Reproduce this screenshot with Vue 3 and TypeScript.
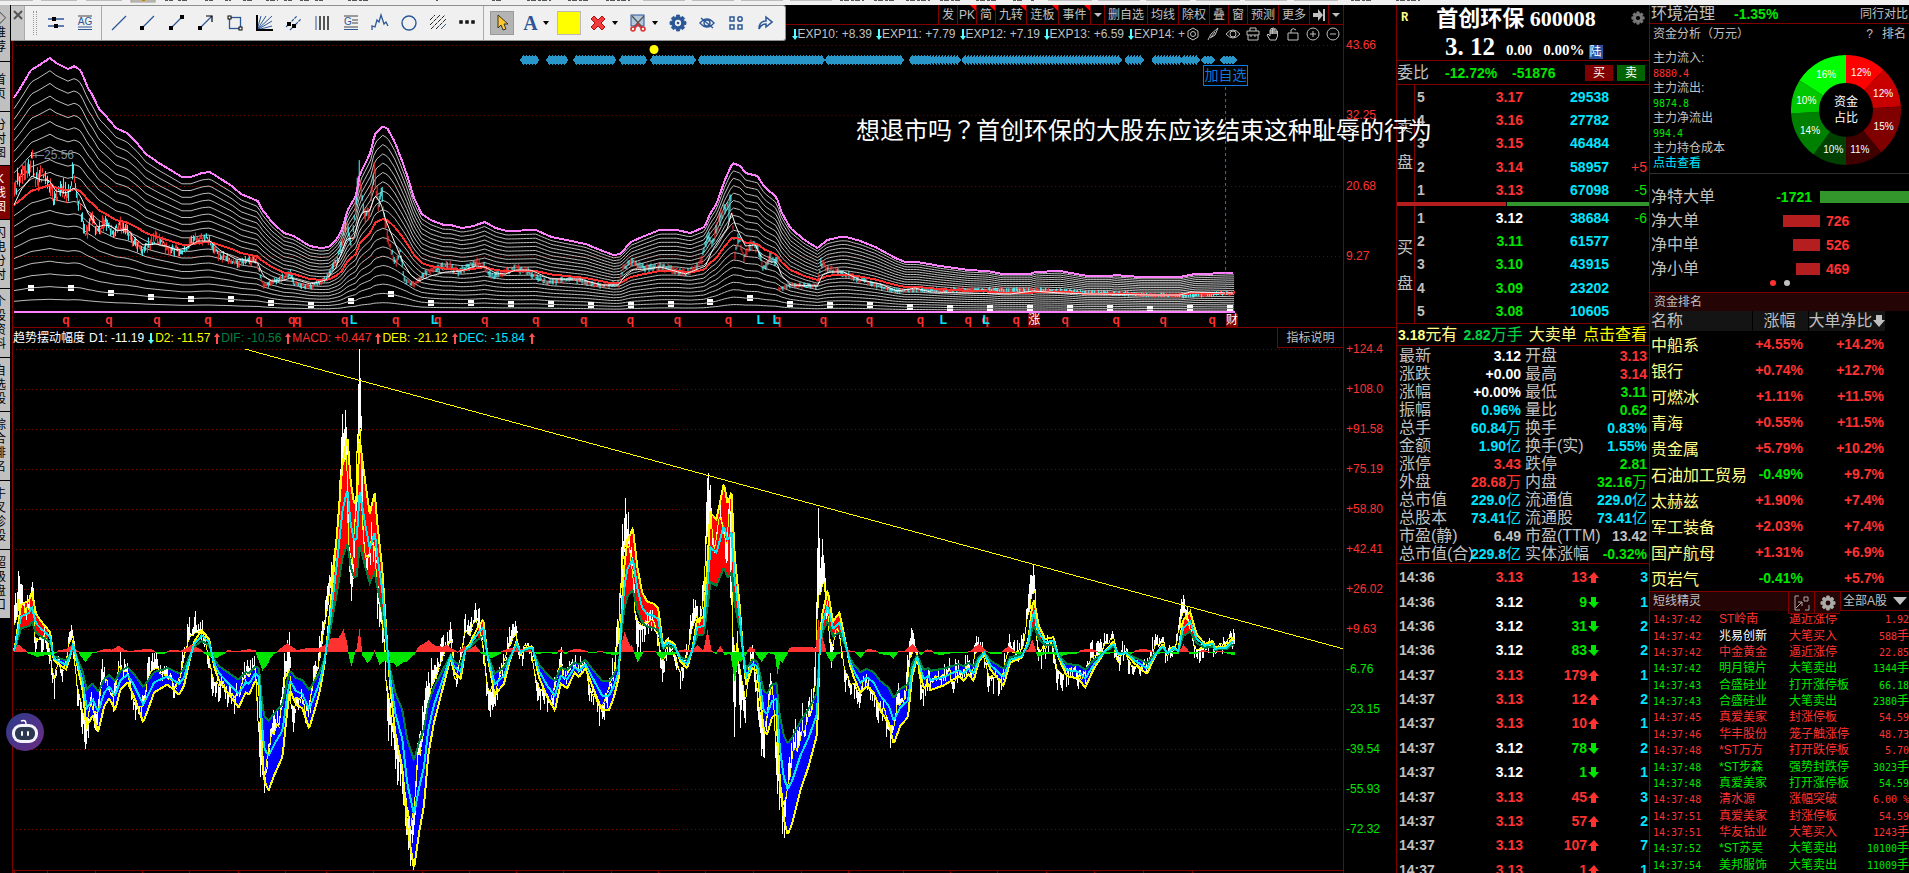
<script setup lang="ts">
type Pt = [number, number]

function toPts(flat: number[], x0 = 0, y0 = 0, sx = 1, sy = 1): Pt[] {
  const out: Pt[] = []
  for (let i = 0; i < flat.length; i += 2) out.push([x0 + flat[i] / sx, y0 + flat[i + 1] / sy])
  return out
}
function lerp(pts: Pt[], x: number): number {
  if (x <= pts[0][0]) return pts[0][1]
  for (let i = 1; i < pts.length; i++) {
    const [ax, ay] = pts[i - 1]
    const [bx, by] = pts[i]
    if (x <= bx) return ay + ((by - ay) * (x - ax)) / Math.max(bx - ax, 0.01)
  }
  return pts[pts.length - 1][1]
}
let seed = 20240611
function rnd(): number {
  seed = (seed * 1103515245 + 12345) % 2147483648
  return seed / 2147483648
}
const X0 = 13
const X1 = 1234
function line(fn: (x: number) => number, step = 2): string {
  const parts: string[] = []
  for (let x = X0; x <= X1; x += step) parts.push(`${x} ${fn(x).toFixed(1)}`)
  return 'M' + parts.join('L')
}

/* ---- upper plot: price with a fan of bands ---- */
const envelope = toPts([13,98,20,87,30,70,37,66,49,58,55,63,67,69,74,66,80,71,87,88,92,96,98,109,104,115,115,128,126,133,136,143,145,154,158,163,168,169,181,177,190,177,201,173,209,172,220,179,231,186,240,194,257,201,261,209,271,222,283,233,293,236,309,246,320,248,328,247,336,239,341,230,347,210,355,196,359,175,370,152,374,134,382,126,387,129,394,142,401,160,407,177,413,197,421,214,430,220,443,225,450,225,461,228,473,226,484,222,495,228,506,231,535,230,551,237,585,244,602,251,613,255,620,254,630,242,644,236,659,230,676,230,690,233,704,227,710,213,716,204,724,181,732,163,740,166,745,173,757,176,764,187,770,192,776,197,781,212,790,228,804,240,817,248,827,240,840,237,846,237,860,241,875,247,895,258,905,262,917,262,940,266,968,270,987,271,1002,274,1030,274,1035,272,1060,271,1087,276,1110,276,1115,275,1140,277,1180,277,1195,274,1230,273,1234,273])
const average = toPts([13,205,20,190,31,176,40,180,48,180,55,191,65,193,73,188,80,197,87,213,92,220,97,227,103,225,110,226,116,231,126,229,135,239,142,245,155,244,165,246,176,250,185,248,197,241,209,241,220,251,235,259,243,260,257,263,262,275,270,281,280,281,290,278,310,284,325,280,335,268,341,252,346,239,353,238,358,220,362,212,369,211,374,195,380,203,385,220,393,240,402,262,410,275,418,281,430,276,445,272,460,271,475,266,484,267,495,273,505,274,515,270,530,270,550,279,580,279,600,285,618,285,624,276,632,270,645,269,660,267,685,274,700,268,705,266,712,250,720,238,727,228,731,213,736,228,745,246,755,245,760,256,770,262,776,262,781,275,790,285,817,286,822,275,830,272,843,272,860,280,880,284,897,291,915,288,930,292,960,293,1010,294,1033,291,1060,293,1090,294,1150,295,1180,295,1190,292,1234,293])
const price = toPts([13,195,16,182,22,172,27,170,31,158,34,180,42,174,47,180,52,200,60,188,66,197,72,170,76,196,84,236,90,215,96,233,103,220,113,234,117,225,126,232,140,251,155,238,165,248,180,251,195,238,207,239,218,256,235,262,255,260,262,286,275,280,290,274,293,284,308,287,323,280,335,262,341,240,345,218,350,247,358,170,363,215,368,210,373,174,377,203,381,195,384,220,388,245,395,265,399,250,403,280,413,285,425,272,447,265,457,272,475,262,483,267,492,277,514,268,526,271,545,283,570,279,600,286,618,284,622,268,632,262,645,268,660,266,685,274,700,262,707,235,712,242,720,215,725,205,728,212,730,194,734,255,738,238,743,258,750,243,757,247,762,268,770,258,777,262,778,289,790,285,816,286,820,264,826,268,840,273,860,280,895,291,915,290,1033,290,1180,296,1234,293])
const FLOOR = 312
const bandY = (k: number) => (x: number) => FLOOR - ((FLOOR - lerp(envelope, x)) * k) / 20
const bands = Array.from({ length: 19 }, (_, i) => i + 1).filter(k => k !== 10).map(k => line(bandY(k), 3))
const topBand = line(bandY(20), 2)
const midBand = line(bandY(10), 2)
const averagePath = line(x => lerp(average, x), 2)
let upSticks = ''
let downSticks = ''
for (let x = X0; x <= X1; x += 1) {
  const p = lerp(price, x)
  const room = (FLOOR - p) / 150
  const mid = p + (rnd() - 0.5) * 14 * room
  const half = 1 + rnd() * 10 * room
  const seg = `M${x}.5 ${(mid - half).toFixed(1)}V${(mid + half).toFixed(1)}`
  if (rnd() < 0.5) upSticks += seg
  else downSticks += seg
}
const knots = Array.from({ length: 31 }, (_, i) => 30 + i * 40).map(x => ({ x: x - 3, y: Math.round(bandY(2)(x)) - 3 }))
const gemRuns: Pt[] = [[523, 535], [549, 564], [576, 612], [622, 645], [653, 694], [701, 822], [828, 901], [912, 957], [965, 1119], [1128, 1142], [1155, 1179], [1184, 1196], [1205, 1213], [1224, 1233]]
let gems = ''
for (const [a, b] of gemRuns) for (let x = a; x <= b; x += 3) gems += `M${x - 4} 60l4 -5l4 5l-4 5z`
const priceLevels = [{ t: '43.66', y: 45 }, { t: '32.25', y: 115 }, { t: '20.68', y: 186 }, { t: '9.27', y: 256 }]

const qMarks = [65, 108, 156, 207, 258, 291, 297, 344, 395, 437, 484, 535, 583, 630, 677, 728, 777, 823, 869, 920, 968, 985, 1016, 1065, 1116, 1163, 1212]
const lMarks = [353, 434, 760, 776, 943, 986]
const pct = (x: number) => `${((x - 12) / 1331) * 100}%`

/* ---- lower plot: swing oscillator ---- */
const BASE = 651
const trend: Pt[] = [
  ...toPts([40,925,60,825,85,815,92,795,105,845,125,865,148,885,158,945,175,955,195,965,205,945,217,905,230,960,245,1010,257,1090,275,1065,292,1100,310,1045,325,1028,343,1053,358,1010,380,993,400,1025,427,1080,445,1045,460,1015,500,998,535,1020,550,1000,565,950,580,905,603,880,625,900,640,960,655,990,680,1015,713,1048,735,1015,745,1020,763,990,775,1000,782,1120,790,1205,803,1228,820,1195,845,1155,860,1050,868,1010,885,1040,905,1050,925,1093,945,1045,958,1010,972,950,985,860,1000,740,1010,660,1025,520,1040,458,1050,560,1060,605,1068,600,1077,465,1090,540,1107,628,1122,583,1130,650,1145,750,1160,920,1170,1015,1185,1110,1205,1180,1220,1310,1240,1397,1255,1320,1270,1260,1283,1150,1300,1080,1325,1010,1350,940,1360,970,1380,985,1395,920,1408,910], 0, 330, 3, 2.888),
  ...toPts([3,605,20,580,38,560,50,640,72,730,100,705,115,660,138,608,150,635,165,625,185,620,205,690,230,735,253,765,270,705,290,715,312,680,325,690,345,670,365,710,395,765,415,765,430,735,445,690,452,560,460,450,470,385,487,355,500,440,515,500,530,520,550,525,563,535,578,620,590,605,612,615,630,655,650,670,665,630,680,560,700,555,712,420,720,320,738,335,760,255,772,300,783,275,793,420,808,530,818,640,827,710,845,670,860,675,880,810,890,820,905,780,918,775,928,920,940,1010,952,1045,965,1020,990,945,1015,890,1040,820,1048,620,1055,550,1072,495,1088,565,1107,545,1120,590,1138,660,1150,690,1170,725,1190,710,1210,725,1230,765,1255,795,1270,840,1290,800,1313,780,1325,690,1340,648,1360,715,1375,705], 470, 440, 3, 3),
  ...toPts([0,1010,40,1000,85,980,100,990,115,975,130,990,145,950,162,930,180,965,220,1000,240,950,275,940,295,900,305,830,312,815,325,870,345,900,370,895,385,940,410,980,445,985,465,1005,490,965,525,925,550,905,565,935,588,930,610,950,650,975,680,930,698,910,712,932,730,915,745,925,758,860,780,840,800,890,825,910,848,903,855,918,890,915,905,898,914,903], 930, 330, 3, 2.888),
]
const spikes = toPts([14,592,20,591,31,581,70,624,84,748,155,652,194,620,259,776,288,650,292,731,341,413,344,409,350,600,358,348,387,740,394,761,427,671,449,621,474,602,493,703,514,620,559,652,621,523,624,497,636,660,661,677,695,599,707,477,708,472,730,483,734,736,740,727,761,743,777,793,818,507,822,538,831,667,859,707,913,632,953,692,976,635,1009,636,1031,579,1033,564,1061,687,1112,630,1133,674,1162,636,1180,608,1183,594,1230,630])
const spikeFall = [1, 0.8, 0.55, 0.3]
const cy = (x: number) => lerp(trend, x)
const scaled = (k: number) => (x: number) => BASE + (cy(x) - BASE) * k
const cyanPath = line(cy, 1)
const outerPath = line(scaled(4 / 3), 1)
const innerPath = line(scaled(2 / 3), 1)
let redFill = ''
let blueFill = ''
let whiteSticks = ''
const fastPts: string[] = []
let drift = 0
for (let x = X0; x <= X1; x++) {
  const c = cy(x)
  const off = c - BASE
  const a = Math.round(scaled(4 / 3)(x))
  const b = Math.round(scaled(2 / 3)(x))
  if (off < -17) redFill += `M${x}.5 ${a}V${b}`
  if (off > 10) blueFill += `M${x}.5 ${a}V${b}`
  const slope = Math.max(-32, Math.min(32, (cy(x + 4) - cy(x - 4)) * 0.8))
  drift = drift * 0.75 + (rnd() - 0.5) * (4 + Math.abs(off) * 0.06)
  let fast = c + slope + drift
  let raw = fast + slope * 0.6 + (rnd() - 0.5) * (22 + Math.abs(off) * 0.16)
  for (const [sx, sy] of spikes) {
    const d = Math.abs(x - sx)
    if (d < 4) {
      const r = c + (sy - c) * spikeFall[d]
      if (Math.abs(r - c) > Math.abs(raw - c)) raw = r
      if (d < 3) fast = c + (sy - c) * 0.45
    }
  }
  fastPts.push(`${x} ${fast.toFixed(1)}`)
  whiteSticks += `M${x}.5 ${Math.round(fast)}V${Math.round(raw)}`
}
const fastPath = 'M' + fastPts.join('L')
const bumps: number[][] = [[17,6,6],[35,7,-4],[70,4,5],[84,5,-10],[103,8,4],[117,5,4],[150,8,3],[190,8,5],[215,8,-4],[261,5,-16],[267,4,-6],[286,7,8],[315,10,4],[328,9,9],[336,9,10],[342,4,17],[350,3,-14],[358,2,21],[366,6,-10],[373,3,5],[378,4,-10],[386,6,-10],[395,6,-11],[405,9,-10],[427,10,12],[445,8,7],[463,4,3],[474,4,5],[490,7,-5],[508,8,4],[559,3,4],[623,4,17],[630,8,4],[636,4,-12],[660,4,-6],[697,4,6],[707,3,20],[720,3,7],[734,3,-26],[740,6,-10],[750,4,4],[761,5,-10],[777,2,-17],[782,5,-10],[800,20,4],[818,2,28],[822,3,13],[831,4,-7],[860,4,-5],[893,3,-5],[912,6,7],[920,5,-4],[978,5,5],[1008,5,5],[1032,3,10],[1038,5,-5],[1060,6,-3],[1183,4,8],[1195,6,-3]]
let histUp = ''
let histDown = ''
for (let x = X0; x <= X1; x++) {
  let h = Math.sin(x / 9) * 1.2 + Math.sin(x / 4.3) * 0.9
  for (const [bx, w, v] of bumps) {
    const d = Math.abs(x - bx)
    if (d < w * 1.4) h += v * (1 - d / (w * 1.4))
  }
  if (h > 0) histUp += `M${x}.5 651V${(650 - h).toFixed(0)}`
  else histDown += `M${x}.5 651V${(652 - h).toFixed(0)}`
}
const swingLevels = ['+124.4', '+108.0', '+91.58', '+75.19', '+58.80', '+42.41', '+26.02', '+9.63', '-6.76', '-23.15', '-39.54', '-55.93', '-72.32'].map((t, i) => ({ t, y: 348 + i * 40 }))
const timeTicks = [13, 46, 94, 141, 188, 237, 284, 325, 372, 421, 468, 515, 562, 610, 657, 705, 753, 801, 848, 903, 950, 997, 1046, 1094, 1143, 1192]

/* ---- chrome ---- */
const tabs = [
  { t: '◇推荐', h: 57 }, { t: '首页', h: 50 }, { t: '分时图', h: 54 }, { t: 'K线图', h: 54, on: true }, { t: '闪电分时', h: 69 },
  { t: '个股资料', h: 69 }, { t: '自选股', h: 54 }, { t: '综合排名', h: 69 }, { t: '牛叉诊股', h: 69 }, { t: '超级盘口', h: 69 },
]
const B = '#2b5797'
const dot = (x: number, y: number) => `<rect x="${x - 2}" y="${y - 2}" width="4" height="4" fill="#000"/>`
const tools = [
  { n: '水平线', s: `<path d="M4 8H20M4 15H20" stroke="${B}" stroke-width="1.4"/>${dot(10, 8)}${dot(12, 15)}` },
  { n: '文字标注', s: `<path d="M5 5H19" stroke="#444"/><path d="M5 16H19M5 18.500H19" stroke="${B}"/><text x="12" y="14" font-size="10" text-anchor="middle" fill="${B}" font-family="Liberation Sans">AG</text>` },
  { n: '直线', s: `<path d="M5 19L19 5" stroke="${B}" stroke-width="1.3"/>` },
  { n: '射线', s: `<path d="M5 18L18 5" stroke="${B}" stroke-width="1.3"/>${dot(6, 17)}` },
  { n: '线段', s: `<path d="M6 17L17 6" stroke="${B}" stroke-width="1.3"/>${dot(6, 17)}${dot(17, 6)}` },
  { n: '箭头', s: `<path d="M6 17L18 5" stroke="${B}" stroke-width="1.3"/><path d="M12 5H18V11" fill="none" stroke="#000" stroke-width="1.2"/>${dot(6, 17)}` },
  { n: '矩形', s: `<rect x="6.500" y="6.500" width="11" height="11" fill="none" stroke="${B}" stroke-width="1.3"/><rect x="5" y="5" width="3" height="3" fill="#fff" stroke="#000"/><rect x="16" y="16" width="3" height="3" fill="#fff" stroke="#000"/>` },
  { n: '甘氏线', s: `<path d="M5 19L9 5M5 19L14 5M5 19L20 5M5 19L20 10M5 19L20 15" stroke="${B}"/><path d="M5 4V19H21" fill="none" stroke="#000" stroke-width="2"/>` },
  { n: '平行线', s: `<path d="M5 16L16 5M9 19L20 8" stroke="${B}" stroke-width="1.2" stroke-dasharray="3 1"/>${dot(8, 13)}${dot(13, 15)}` },
  { n: '周期线', s: `<path d="M6 5V19" stroke="${B}"/><path d="M10 5V19M14 5V19M18 5V19" stroke="#000" stroke-width="1.3"/>` },
  { n: '黄金分割', s: `<path d="M5 5H19M13 9H19M13 12H19M5 16H19" stroke="#444"/><path d="M5 18.500H19" stroke="${B}"/><text x="5" y="14" font-size="10" fill="${B}" font-family="Liberation Sans">G</text>` },
  { n: '波浪线', s: `<path d="M4 19V15L7 16L9 9L11 11L13 4L16 13L18 11L20 15" fill="none" stroke="${B}" stroke-width="1.3"/>` },
  { n: '圆形', s: `<circle cx="12" cy="12" r="7" fill="none" stroke="${B}" stroke-width="1.4"/>` },
  { n: '阴影', s: `<path d="M4 9L9 4M4 14L14 4M5 18L19 4M10 18L20 8" stroke="#222" stroke-dasharray="4 1"/><path d="M15 18L20 13" stroke="${B}"/>` },
  { n: '更多工具', s: `<g fill="#fff" stroke="#000" stroke-width="1.4"><rect x="5" y="10" width="2" height="2"/><rect x="11" y="10" width="2" height="2"/><rect x="17" y="10" width="2" height="2"/></g>` },
]
function gearPath(c: number, r: number, depth: number): string {
  let d = ''
  for (let i = 0; i < 8; i++) {
    for (const [o, rr] of [[-0.28, r - depth], [-0.18, r], [0.18, r], [0.28, r - depth]] as Pt[]) {
      const t = (i / 8) * Math.PI * 2 + o
      d += `${d ? 'L' : 'M'}${(c + Math.cos(t) * rr).toFixed(2)} ${(c + Math.sin(t) * rr).toFixed(2)}`
    }
  }
  return d + 'z'
}
const gear = gearPath(12, 9, 2)
const periodButtons = [
  { t: '发', w: 19 }, { t: 'PK', w: 19, hot: true }, { t: '简', w: 19, hot: true }, { t: '九转', w: 31, hot: true }, { t: '连板', w: 32, hot: true }, { t: '事件', w: 32, hot: true }, { t: '▾', w: 14 },
  { t: '删自选', w: 43 }, { t: '均线', w: 31 }, { t: '除权', w: 31 }, { t: '叠', w: 19 }, { t: '窗', w: 19 }, { t: '预测', w: 31 }, { t: '更多', w: 31 }, { t: '⇥', w: 19 }, { t: '▾', w: 15 },
]
const expItems = ['EXP10: +8.39', 'EXP11: +7.79', 'EXP12: +7.19', 'EXP13: +6.59', 'EXP14: +']
const swingItems = [
  { t: 'D1: -11.19', c: 'w', up: false }, { t: 'D2: -11.57', c: 'y', up: true }, { t: 'DIF: -10.56', c: 'dg', up: true },
  { t: 'MACD: +0.447', c: 'r', up: true }, { t: 'DEB: -21.12', c: 'y', up: true }, { t: 'DEC: -15.84', c: 'c', up: true },
]
const chartIcons = [
  { n: '设置', s: '<path d="M7 1L12 4V10L7 13L2 10V4Z"/><circle cx="7" cy="7" r="2.500"/>' },
  { n: '画笔', s: '<path d="M2 13L5 7L12 1L9 8L4 11M5 10L9 5"/>' },
  { n: '显示', s: '<path d="M0 7Q7 -1 14 7Q7 15 0 7Z"/><circle cx="7" cy="7" r="3"/>' },
  { n: '工具箱', s: '<path d="M1 4H13V8H1ZM2 8V13H12V8M4 4V1H10V4M5 8V10M9 8V10"/>' },
  { n: '拖动', s: '<path d="M4 13L1 8L2 7L4 9V3L5 3V7V1.500H6.500V7V1H8V7V2H10V7V4H11.500V9L10 13Z"/>' },
  { n: '锁定', s: '<path d="M2 6H12V13H2ZM5 6V3Q7 0 10 3"/>' },
  { n: '放大', s: '<circle cx="7" cy="7" r="6"/><path d="M4 7H10M7 4V10"/>' },
  { n: '缩小', s: '<circle cx="7" cy="7" r="6"/><path d="M4 7H10"/>' },
]

/* ---- quote ---- */
const asks = [['5', '3.17', '29538', ''], ['4', '3.16', '27782', ''], ['3', '3.15', '46484', ''], ['2', '3.14', '58957', '+5'], ['1', '3.13', '67098', '-5']]
const bids = [['1', '3.12', '38684', '-6'], ['2', '3.11', '61577', ''], ['3', '3.10', '43915', ''], ['4', '3.09', '23202', ''], ['5', '3.08', '10605', '']]
const sideOf = (v: string) => (v.startsWith('-') ? 'g' : 'r')
const stats: string[][] = [
  ['最新', '3.12', '', 'w', '开盘', '3.13', '', 'r'], ['涨跌', '+0.00', '', 'w', '最高', '3.14', '', 'r'],
  ['涨幅', '+0.00%', '', 'w', '最低', '3.11', '', 'g'], ['振幅', '0.96%', '', 'c', '量比', '0.62', '', 'g'],
  ['总手', '60.84', '万', 'c', '换手', '0.83%', '', 'c'], ['金额', '1.90', '亿', 'c', '换手(实)', '1.55%', '', 'c'],
  ['涨停', '3.43', '', 'r', '跌停', '2.81', '', 'g'], ['外盘', '28.68', '万', 'r', '内盘', '32.16', '万', 'g'],
  ['总市值', '229.0', '亿', 'c', '流通值', '229.0', '亿', 'c'], ['总股本', '73.41', '亿', 'c', '流通股', '73.41', '亿', 'c'],
  ['市盈(静)', '6.49', '', 's', '市盈(TTM)', '13.42', '', 's'], ['总市值(合)', '229.8', '亿', 'c', '实体涨幅', '-0.32%', '', 'g'],
]
const deals: [string, string, number, boolean, number][] = [
  ['14:36', '3.13', 13, true, 3], ['14:36', '3.12', 9, false, 1], ['14:36', '3.12', 31, false, 2], ['14:36', '3.12', 83, false, 2],
  ['14:37', '3.13', 179, true, 1], ['14:37', '3.13', 12, true, 2], ['14:37', '3.13', 10, true, 1], ['14:37', '3.12', 78, false, 2],
  ['14:37', '3.12', 1, false, 1], ['14:37', '3.13', 45, true, 3], ['14:37', '3.13', 57, true, 2], ['14:37', '3.13', 107, true, 7], ['14:37', '3.13', 1, true, 1],
]

/* ---- funds ---- */
const flows = [['主力流入:', '8880.4', 'r'], ['主力流出:', '9874.8', 'g'], ['主力净流出', '994.4', 'g']]
const shares: [number, string][] = [[12, '#ff0000'], [12, '#c80000'], [15, '#800000'], [11, '#400000'], [10, '#004000'], [14, '#008000'], [10, '#00c800'], [16, '#00ff00']]
let acc = 0
const slices = shares.map(([v, color]) => {
  const a = (acc / 100) * Math.PI * 2
  acc += v
  const b = (acc / 100) * Math.PI * 2
  const p = (t: number, r: number) => `${(55 + Math.sin(t) * r).toFixed(2)} ${(55 - Math.cos(t) * r).toFixed(2)}`
  const m = (a + b) / 2
  return { v, color, d: `M${p(a, 55)}A55 55 0 0 1 ${p(b, 55)}L${p(b, 27)}A27 27 0 0 0 ${p(a, 27)}Z`, x: 55 + Math.sin(m) * 41, y: 59 - Math.cos(m) * 41 }
})
const nets = [{ t: '净特大单', v: -1721, w: 89 }, { t: '净大单', v: 726, w: 37 }, { t: '净中单', v: 526, w: 27 }, { t: '净小单', v: 469, w: 24 }]
const sectors = [['中船系', '+4.55%', '+14.2%'], ['银行', '+0.74%', '+12.7%'], ['可燃冰', '+1.11%', '+11.5%'], ['青海', '+0.55%', '+11.5%'], ['贵金属', '+5.79%', '+10.2%'], ['石油加工贸易', '-0.49%', '+9.7%'], ['太赫兹', '+1.90%', '+7.4%'], ['军工装备', '+2.03%', '+7.4%'], ['国产航母', '+1.31%', '+6.9%'], ['页岩气', '-0.41%', '+5.7%']]
const feed = [
  ['14:37:42', 'ST岭南', '逼近涨停', '1.92', '', 'r'], ['14:37:42', '兆易创新', '大笔买入', '588', '手', 'r', 'w'], ['14:37:42', '中金黄金', '逼近涨停', '22.85', '', 'r'],
  ['14:37:42', '明月镜片', '大笔卖出', '1344', '手', 'g'], ['14:37:43', '合盛硅业', '打开涨停板', '66.18', '', 'g'], ['14:37:43', '合盛硅业', '大笔卖出', '2380', '手', 'g'],
  ['14:37:45', '真爱美家', '封涨停板', '54.59', '', 'r'], ['14:37:46', '华丰股份', '笼子触涨停', '48.73', '', 'r'], ['14:37:48', '*ST万方', '打开跌停板', '5.70', '', 'r'],
  ['14:37:48', '*ST步森', '强势封跌停', '3023', '手', 'g'], ['14:37:48', '真爱美家', '打开涨停板', '54.59', '', 'g'], ['14:37:48', '清水源', '涨幅突破', '6.00 %', '', 'r'],
  ['14:37:51', '真爱美家', '封涨停板', '54.59', '', 'r'], ['14:37:51', '华友钴业', '大笔买入', '1243', '手', 'r'], ['14:37:52', '*ST苏吴', '大笔卖出', '10100', '手', 'g'], ['14:37:54', '美邦服饰', '大笔卖出', '11009', '手', 'g'],
]
const menuDark = [[165, 8], [178, 9], [205, 8], [225, 6], [243, 10], [266, 12], [284, 8], [300, 9], [315, 8], [348, 22], [436, 2], [492, 10], [527, 24], [568, 22], [606, 24], [840, 24], [874, 22], [906, 24], [940, 22], [976, 20], [1013, 10], [1031, 4], [1351, 22], [1396, 24]]
const menuLight = [[0, 33], [41, 36], [86, 36], [643, 42], [692, 42], [741, 42], [790, 42], [1048, 44], [1098, 42], [1146, 44], [1196, 44], [1245, 42], [1294, 44]]
</script>

<template>
  <div class="app">
    <svg class="menu-edge" width="1909" height="5" aria-hidden="true">
      <rect v-for="m in menuLight" :key="'l' + m[0]" :x="m[0]" y="0" :width="m[1]" height="1" fill="#bdbdbd" />
      <rect x="131" y="0" width="24" height="2" fill="#d8d0c0" stroke="#999" />
      <rect x="142" y="0" width="3" height="1" fill="#c08000" />
      <path v-for="m in menuDark" :key="'d' + m[0]" :d="`M${m[0]} 0.5h${m[1]}`" stroke="#555" stroke-dasharray="3 1 5 2" />
    </svg>
    <main class="main">
      <nav class="tabs">
        <button v-for="t in tabs" :key="t.t" :class="{ on: t.on }" :style="{ height: t.h + 'px' }"><span>{{ t.t }}</span></button>
      </nav>

      <section class="charts">
        <div class="plot-row">
          <div class="plot-head">
            <div class="period">
              <button v-for="(b, i) in periodButtons" :key="i" :style="{ width: b.w + 'px' }" :aria-label="b.t">
                <svg v-if="b.t === '▾'" width="8" height="4"><path d="M0 0H8L4 4Z" fill="#c0c0c0" /></svg>
                <svg v-else-if="b.t === '⇥'" width="13" height="12"><path d="M0 4H5V0L10 6L5 12V8H0ZM10 0H12V12H10Z" fill="#c0c0c0" /></svg>
                <template v-else>{{ b.t }}</template>
                <i v-if="b.hot" class="hot"></i>
              </button>
            </div>
            <div class="exps">
              <div class="exp-list">
                <span v-for="e in expItems" :key="e"><svg width="6" height="11"><path d="M2 0H4V7H6L3 11L0 7H2Z" fill="#5ff" /></svg>{{ e }}</span>
              </div>
              <div class="chart-icons">
                <button v-for="c in chartIcons" :key="c.n" :aria-label="c.n"><svg width="14" height="14" v-html="c.s"></svg></button>
              </div>
            </div>
          </div>
          <div class="axis"></div>
        </div>

        <div class="plot-row upper">
          <div class="plot">
            <svg viewBox="12 41 1331 273" preserveAspectRatio="none" shape-rendering="crispEdges">
              <path d="M15 45.500H1343M15 115.500H1343M15 186.500H1343M15 256.500H1343" class="grid" />
              <path v-for="(b, i) in bands" :key="i" :d="b" stroke="#c0c0c0" fill="none" />
              <path :d="upSticks" stroke="#ff3232" />
              <path :d="downSticks" stroke="#54fcfc" />
              <path :d="midBand" stroke="#ff3232" stroke-width="2" fill="none" />
              <path :d="averagePath" stroke="#fff" fill="none" />
              <g v-for="k in knots" :key="k.x"><rect :x="k.x" :y="k.y" width="6" height="6" fill="#fff" /><path :d="`M${k.x} ${k.y + 3.5}h6`" stroke="#888" /></g>
              <path :d="topBand" stroke="#ff80ff" stroke-width="2" fill="none" />
              <path d="M13 312H1235" stroke="#ff80ff" stroke-width="2" />
              <path :d="gems" fill="#2896c8" />
              <path d="M1225.500 87V294" stroke="#0f78dc" stroke-dasharray="3 3" />
              <path d="M32 155.500H43M35 153V158" stroke="#8090a0" />
              <circle cx="653.500" cy="49.500" r="4.500" fill="#ff0" shape-rendering="auto" />
            </svg>
            <span class="peak">25.56</span>
            <button class="add-fav" :style="{ left: pct(1203) }">加自选</button>
          </div>
          <div class="axis"><span v-for="l in priceLevels" :key="l.t" class="r" :style="{ top: ((l.y - 41) / 273) * 100 + '%' }">{{ l.t }}</span></div>
        </div>

        <div class="plot-row marks">
          <div class="plot">
            <span v-for="x in qMarks" :key="'q' + x" class="q" :style="{ left: pct(x) }">q</span>
            <span v-for="x in lMarks" :key="'L' + x" class="l" :style="{ left: pct(x) }">L</span>
            <span class="flag" :style="{ left: pct(1034) }">涨</span>
            <span class="flag" :style="{ left: pct(1232) }">财</span>
          </div>
          <div class="axis"></div>
        </div>

        <div class="plot-row">
          <div class="swing-head">
            <b>趋势摆动幅度</b>
            <span v-for="s in swingItems" :key="s.t" :class="s.c">{{ s.t }}
              <svg width="6" height="11"><path v-if="s.up" d="M2 11H4V4H6L3 0L0 4H2Z" fill="#ff5050" /><path v-else d="M2 0H4V7H6L3 11L0 7H2Z" fill="#5ff" /></svg>
            </span>
            <button class="explain">指标说明</button>
          </div>
          <div class="axis"></div>
        </div>

        <div class="plot-row lower">
          <div class="plot">
            <svg viewBox="12 347 1331 526" preserveAspectRatio="none" shape-rendering="crispEdges">
              <path v-for="l in swingLevels" :key="l.t" :d="`M15 ${l.y + 0.5}H1343`" class="grid" />
              <path :d="redFill" stroke="#f00" />
              <path :d="blueFill" stroke="#00f" />
              <path :d="whiteSticks" stroke="#fff" />
              <path :d="fastPath" stroke="#ff0" fill="none" />
              <path :d="outerPath" stroke="#ff0" stroke-width="2" fill="none" />
              <path :d="histUp" stroke="#ff3232" />
              <path :d="histDown" stroke="#00e600" />
              <path :d="innerPath" stroke="#008040" stroke-width="2" fill="none" />
              <path :d="cyanPath" stroke="#00e6f0" stroke-width="2" fill="none" />
              <path d="M244 348L1343 648" stroke="#ff0" />
              <path d="M12 869.500H1343" stroke="#800000" />
              <path v-for="t in timeTicks" :key="t" :d="`M${t}.5 870V873`" stroke="#800000" />
            </svg>
          </div>
          <div class="axis"><span v-for="l in swingLevels" :key="l.t" :class="sideOf(l.t)" :style="{ top: ((l.y - 347) / 526) * 100 + '%' }">{{ l.t }}</span></div>
        </div>
      </section>

      <section class="quote">
        <header class="q-head">
          <span class="tag">R</span>
          <h1>首创环保 600008</h1>
          <button class="cog" aria-label="设置"><svg width="14" height="14" viewBox="2 2 20 20"><path :d="gear" fill="#777" stroke="#777" /><circle cx="12" cy="12" r="3" fill="#000" /></svg></button>
          <p><strong>3. 12</strong><span>0.00</span><span>0.00%</span><em>陆</em></p>
        </header>
        <div class="ratio">
          <span class="lbl">委比</span><b class="g a">-12.72%</b><b class="g b">-51876</b>
          <button class="buy">买</button><button class="sell">卖</button>
        </div>
        <div class="book">
          <div class="side"><span>卖</span><span>盘</span></div>
          <table>
            <tbody>
              <tr v-for="a in asks" :key="a[0]"><td>{{ a[0] }}</td><td class="r">{{ a[1] }}</td><td class="c">{{ a[2] }}</td><td :class="sideOf(a[3])">{{ a[3] }}</td></tr>
            </tbody>
          </table>
        </div>
        <div class="balance"><i></i><i></i></div>
        <div class="book">
          <div class="side"><span>买</span><span>盘</span></div>
          <table>
            <tbody>
              <tr v-for="(a, i) in bids" :key="a[0]"><td>{{ a[0] }}</td><td :class="i ? 'g' : 'w'">{{ a[1] }}</td><td class="c">{{ a[2] }}</td><td :class="sideOf(a[3])">{{ a[3] }}</td></tr>
            </tbody>
          </table>
        </div>
        <div class="alert"><span><b>3.18</b>元有</span><span class="lg"><b>2.82</b>万手</span><span>大卖单</span><a href="#">点击查看</a></div>
        <table class="stats">
          <tbody>
            <tr v-for="s in stats" :key="s[0]">
              <th>{{ s[0] }}</th><td :class="s[3]">{{ s[1] }}<i>{{ s[2] }}</i></td><th>{{ s[4] }}</th><td :class="s[7]">{{ s[5] }}<i>{{ s[6] }}</i></td>
            </tr>
          </tbody>
        </table>
        <div class="deals">
          <table>
            <tbody>
              <tr v-for="(d, i) in deals" :key="i">
                <td>{{ d[0] }}</td><td :class="d[3] ? 'r' : 'w'">{{ d[1] }}</td>
                <td :class="d[3] ? 'r' : 'g'">{{ d[2] }}<svg width="11" height="11"><path v-if="d[3]" d="M6 0L11 6H8V11H3V6H0Z" fill="#ff3232" /><path v-else d="M6 11L11 5H8V0H3V5H0Z" fill="#00e600" /></svg></td>
                <td class="c">{{ d[4] }}</td>
              </tr>
            </tbody>
          </table>
        </div>
      </section>

      <aside class="funds">
        <div class="peer"><span>环境治理</span><b class="g">-1.35%</b><a href="#">同行对比</a></div>
        <div class="analysis">
          <div class="title"><span>资金分析（万元）</span><button>?</button><a href="#">排名</a></div>
          <div class="flows">
            <template v-for="f in flows" :key="f[0]"><span>{{ f[0] }}</span><span class="mono" :class="f[2]">{{ f[1] }}</span></template>
            <span>主力持仓成本</span><a href="#">点击查看</a>
          </div>
          <svg class="donut" width="110" height="110">
            <path v-for="(s, i) in slices" :key="i" :d="s.d" :fill="s.color" />
            <text v-for="(s, i) in slices" :key="'t' + i" :x="s.x" :y="s.y" class="pc">{{ s.v }}%</text>
            <text x="55" y="51" class="mid">资金</text><text x="55" y="67" class="mid">占比</text>
          </svg>
        </div>
        <div class="nets">
          <div v-for="n in nets" :key="n.t" class="net">
            <span>{{ n.t }}</span>
            <div class="left"><b v-if="n.v < 0" class="g">{{ n.v }}</b><i v-else :style="{ width: n.w + 'px' }"></i></div>
            <div class="right"><i v-if="n.v < 0"></i><b v-else class="r">{{ n.v }}</b></div>
          </div>
          <div class="dots"><i class="on"></i><i></i></div>
        </div>
        <div class="rank-title">资金排名</div>
        <table class="rank">
          <thead><tr><th>名称</th><th>涨幅</th><th>大单净比<svg width="12" height="12"><path d="M3 0H9V5H12L6 12L0 5H3Z" fill="#c0c0c0" /></svg></th><th></th></tr></thead>
          <tbody>
            <tr v-for="s in sectors" :key="s[0]"><td>{{ s[0] }}</td><td :class="sideOf(s[1])">{{ s[1] }}</td><td class="r">{{ s[2] }}</td><td></td></tr>
          </tbody>
        </table>
        <div class="wizard">
          <span>短线精灵</span>
          <button aria-label="弹出"><svg width="16" height="16" fill="none" stroke="#aaa"><path d="M5 1H1V15H6M11 15H15V10M2 13L8 7M4 7H8V11M10 2H14V6H10Z" /></svg></button>
          <button aria-label="设置"><svg width="16" height="16" viewBox="2 2 20 20"><path :d="gear" fill="#aaa" stroke="#aaa" /><circle cx="12" cy="12" r="3" fill="#240404" /></svg></button>
          <label><select aria-label="股票范围"><option>全部A股</option></select><svg width="14" height="8"><path d="M0 0H14L7 8Z" fill="#c0c0c0" /></svg></label>
        </div>
        <div class="feed">
          <table>
            <tbody>
              <tr v-for="(f, i) in feed" :key="i" :class="f[5]"><td><span class="mono">{{ f[0] }}</span></td><td :class="f[6]">{{ f[1] }}</td><td>{{ f[2] }}</td><td><span class="mono">{{ f[3] }}</span>{{ f[4] }}</td></tr>
            </tbody>
          </table>
        </div>
      </aside>
    </main>

    <div class="toolbar">
      <button class="close" aria-label="关闭"><svg width="10" height="10"><path d="M1 1L9 9M9 1L1 9" stroke="#555" stroke-width="2" /></svg></button>
      <i class="grip"></i>
      <template v-for="(t, i) in tools" :key="t.n">
        <button class="tool" :aria-label="t.n"><svg width="24" height="24" v-html="t.s"></svg></button>
        <i v-if="i === 1" class="sep"></i>
      </template>
      <i class="sep"></i>
      <button class="pointer" aria-label="选择"><svg width="16" height="18"><path d="M4 1V14L7 11L9 16L12 15L10 10H14Z" fill="#ffc828" stroke="#333" /></svg></button>
      <button class="tool letter">A</button>
      <button class="caret" aria-label="字体选项"><svg width="6" height="4"><path d="M0 0H6L3 4Z" /></svg></button>
      <button class="swatch" aria-label="颜色"></button>
      <button class="tool" aria-label="删除"><svg width="18" height="18"><path d="M2 5L5 2L9 6L13 2L16 5L12 9L16 13L13 16L9 12L5 16L2 13L6 9Z" fill="#f03c3c" stroke="#b01010" /></svg></button>
      <button class="caret wide" aria-label="删除选项"><svg width="6" height="4"><path d="M0 0H6L3 4Z" /></svg></button>
      <button class="tool" aria-label="截图"><svg width="20" height="20"><rect x="3" y="2" width="13" height="11" fill="#b4c8dc" stroke="#2b5797" /><path d="M4 3L14 14M16 3L6 14" stroke="#555" stroke-width="1.300" /><circle cx="5" cy="16" r="2" fill="none" stroke="#dc3232" stroke-width="1.600" /><circle cx="15" cy="16" r="2" fill="none" stroke="#dc3232" stroke-width="1.600" /><path d="M7 15L10 11L13 15" fill="none" stroke="#dc3232" stroke-width="1.600" /></svg></button>
      <button class="caret wide" aria-label="截图选项"><svg width="6" height="4"><path d="M0 0H6L3 4Z" /></svg></button>
      <button class="tool" aria-label="设置"><svg width="18" height="18" viewBox="2 2 20 20"><path :d="gear" fill="#2b5797" stroke="#2b5797" /><circle cx="12" cy="12" r="3.500" fill="#f0f0f0" /><circle cx="12" cy="12" r="1.500" fill="#2b5797" /></svg></button>
      <button class="tool" aria-label="隐藏"><svg width="18" height="14" fill="none" stroke="#2b5797" stroke-width="1.400"><path d="M2 7Q9 -1 16 7Q9 15 2 7ZM3 2L15 12" /><circle cx="9" cy="7" r="3" /></svg></button>
      <button class="tool" aria-label="组件"><svg width="16" height="16" fill="none" stroke="#2b5797" stroke-width="1.500"><rect x="2" y="2" width="4" height="4" /><circle cx="12" cy="4" r="2.200" /><rect x="2" y="10" width="4" height="4" /><rect x="10" y="10" width="4" height="4" /></svg></button>
      <button class="tool" aria-label="分享"><svg width="16" height="16" fill="none" stroke="#2b5797" stroke-width="1.500"><path d="M2 14Q2 6 9 6V2L15 7L9 12V9Q4 9 2 14Z" /></svg></button>
    </div>

    <p class="note">想退市吗<span>？</span>首创环保的大股东应该结束这种耻辱的行为</p>

    <button class="robot" aria-label="助手">
      <svg width="38" height="38">
        <defs><linearGradient id="orb" x1="0" y1="0" x2="1" y2="1"><stop offset="0" stop-color="#2c3c8c" /><stop offset="1" stop-color="#6c2c84" /></linearGradient></defs>
        <circle cx="19" cy="19" r="19" fill="url(#orb)" />
        <path d="M15 8Q20 6 20 11" fill="none" stroke="#fff" stroke-width="1.500" />
        <rect x="6" y="11" width="26" height="19" rx="9" fill="#f4f4fc" />
        <rect x="9" y="14" width="20" height="13" rx="6" fill="#2c3850" />
        <rect x="15" y="18" width="2" height="5" rx="1" fill="#fff" /><rect x="21" y="18" width="2" height="5" rx="1" fill="#fff" />
      </svg>
    </button>
  </div>
</template>

<style>
html, body { margin: 0; background: #000; }
</style>

<style scoped>
.app { position: relative; display: flex; flex-direction: column; height: 100vh; overflow: hidden; background: #000; color: #c0c0c0; font: 12px/16px "Liberation Sans", "Noto Sans CJK SC", sans-serif; }
button { all: unset; box-sizing: border-box; cursor: pointer; display: flex; align-items: center; justify-content: center; }
a { color: inherit; text-decoration: none; }
i, em { font-style: normal; }
table { border-collapse: collapse; table-layout: fixed; width: 100%; }
td, th { padding: 0; text-align: left; white-space: nowrap; }
th { font-weight: normal; }
.r { color: #ff3232; } .g { color: #00e600; } .c { color: #00e6ff; } .w { color: #fff; } .y { color: #ff0; } .s { color: #c0c0c0; } .dg { color: #008040; }
.mono { font: 10px/12px "DejaVu Sans Mono", monospace; }
.menu-edge { flex: none; background: #f0f0f0; width: 100%; height: 5px; }
.main { flex: 1; min-height: 0; display: grid; grid-template-columns: 12px minmax(0, 1fr) 253px 260px; }

.tabs button { width: 10px; overflow: hidden; background: #c0c0c0; color: #000; border-bottom: 1px solid #000; justify-content: flex-end; }
.tabs .on { background: #800000; color: #fff; }
.tabs span { width: 12px; margin-right: 4px; flex: none; line-height: 14px; word-break: break-all; text-align: center; }

.charts { display: flex; flex-direction: column; min-width: 0; border-left: 1px solid #800000; }
.plot-row { display: flex; flex: none; }
.plot-head, .plot, .swing-head { flex: 1; min-width: 0; position: relative; }
.axis { width: 52px; flex: none; border-left: 1px solid #800000; position: relative; }
.axis span { position: absolute; left: 2px; line-height: 16px; margin-top: -8px; }
.period { display: flex; justify-content: flex-end; height: 20px; border-bottom: 1px solid #800000; box-sizing: border-box; }
.period button { position: relative; border-left: 1px solid #800000; flex: none; }
.hot { position: absolute; right: 0; top: 0; border-top: 6px solid #f00; border-left: 6px solid transparent; }
.exps { display: flex; justify-content: flex-end; height: 16px; padding-top: 2px; box-sizing: border-box; align-items: center; }
.exp-list { display: flex; gap: 4px; }
.exp-list span { white-space: nowrap; display: flex; align-items: center; width: 80px; }
.exp-list span:last-child { width: 58px; }
.chart-icons { display: flex; gap: 6px; padding-right: 3px; }
.chart-icons svg { fill: none; stroke: #c0c0c0; }
.upper { height: 273px; }
.plot svg { display: block; width: 100%; height: 100%; }
.grid { stroke: #800000; stroke-dasharray: 1 3; }
.peak { position: absolute; left: 31px; top: 106px; color: #8090a0; }
.add-fav { position: absolute; top: 24px; width: 45px; height: 21px; border: 1px solid #0f78dc; color: #0f78dc; font-size: 14px; line-height: 16px; padding-bottom: 2px; }
.marks { height: 14px; border-bottom: 1px solid #800000; box-sizing: border-box; }
.marks span { position: absolute; line-height: 13px; transform: translateX(-50%); }
.marks .q { color: #ff3232; font-weight: bold; }
.marks .l { color: #00e6ff; font-weight: bold; }
.marks .flag { background: #800000; color: #fff; width: 12px; }
.swing-head { height: 20px; display: flex; align-items: center; }
.swing-head b { color: #fff; font-weight: normal; margin-right: 4px; }
.swing-head span { display: flex; align-items: center; gap: 4px; margin-right: 1px; white-space: nowrap; }
.explain { margin-left: auto; width: 66px; height: 20px; border: 1px solid #800000; border-width: 0 0 1px 1px; }
.lower { flex: 1; min-height: 0; }

.quote, .funds { border-left: 1px solid #800000; min-width: 0; overflow: hidden; display: flex; flex-direction: column; }
.quote > *, .funds > * { flex: none; }
.q-head { position: relative; height: 55px; border-bottom: 1px solid #800000; color: #fff; font-family: "Liberation Serif", "Noto Sans CJK SC", serif; }
.q-head h1 { margin: 0; font-size: 22px; line-height: 28px; text-align: center; padding-right: 14px; }
.q-head p { margin: 0; display: flex; align-items: flex-end; height: 26px; padding-left: 48px; font-weight: bold; font-size: 15px; line-height: 18px; gap: 11px; }
.q-head strong { font-size: 25px; line-height: 24px; }
.q-head em { margin-left: -7px; width: 14px; line-height: 14px; background: #2850a0; font-size: 12px; font-weight: normal; text-align: center; }
.tag { position: absolute; left: 4px; top: 4px; color: #ff8; font: bold 12px/18px "Liberation Mono", monospace; }
.cog { position: absolute; right: 4px; top: 6px; }
.ratio { height: 23px; border-bottom: 1px solid #800000; display: flex; align-items: center; font-size: 14px; }
.lbl { font-size: 16px; }
.ratio .a { margin-left: 16px; width: 67px; } .ratio .b { flex: 1; }
.ratio button { width: 28px; height: 16px; margin-right: 4px; color: #fff; font-size: 12px; }
.buy { background: #800000; } .sell { background: #006400; }
.book { display: flex; height: 117px; }
.side { width: 18px; flex: none; border-right: 1px solid #800000; display: flex; flex-direction: column; justify-content: center; gap: 20px; padding-top: 3px; box-sizing: border-box; font-size: 16px; }
.book table { height: 117px; font: bold 14px/16px "Liberation Sans", sans-serif; }
.book td { text-align: right; }
.book td:nth-child(1) { width: 22px; text-align: left; padding-left: 2px; }
.book td:nth-child(2) { width: 84px; }
.book td:nth-child(3) { width: 86px; }
.book td:nth-child(4) { font-weight: normal; padding-right: 2px; }
.balance { height: 4px; display: flex; gap: 1px; }
.balance i:first-child { background: #b41e1e; flex: 109; } .balance i { background: #32962d; flex: 142; }
.alert { height: 21px; border: 1px solid #800000; border-width: 1px 0; display: flex; justify-content: space-between; align-items: center; padding: 0 2px 0 1px; font-size: 16px; color: #ff8; }
.alert b { font-size: 14px; } .alert a { color: #ff0; } .alert .lg { color: #00d246; }
.stats tr { height: 18px; } .stats { margin-top: 1px; border-bottom: 1px solid #800000; }
.stats th { font-size: 16px; line-height: 18px; padding-left: 2px; width: 66px; }
.stats td { font-size: 14px; font-weight: bold; line-height: 18px; text-align: right; padding-right: 2px; }
.stats i { font-size: 15px; font-weight: normal; line-height: 16px; }
.deals table { height: 317px; margin-top: 1px; font: bold 14px/16px "Liberation Sans", sans-serif; }
.deals td { text-align: right; }
.deals td:nth-child(1) { width: 50px; text-align: left; padding-left: 2px; }
.deals td:nth-child(2) { width: 74px; }
.deals td:nth-child(3) { width: 76px; }
.deals td:nth-child(4) { padding-right: 1px; }
.deals svg { vertical-align: -1px; margin-left: 1px; }

.peer { height: 18px; border-bottom: 1px solid #800000; display: flex; align-items: center; font-size: 14px; }
.peer span { font-size: 16px; width: 83px; padding-left: 1px; } .peer a { margin-left: auto; font-size: 12px; padding-right: 1px; }
.analysis { position: relative; height: 149px; border-bottom: 1px solid #303030; }
.title { display: flex; gap: 9px; height: 20px; align-items: center; padding: 0 3px; } .title button { margin-left: auto; }
.flows { display: flex; flex-direction: column; padding: 7px 3px 0; }
.flows > * { line-height: 15px; } .flows a { color: #00e6ff; }
.donut { position: absolute; right: 8px; top: 31px; }
.pc { fill: #fff; font: 10px "Liberation Sans", sans-serif; text-anchor: middle; } .mid { fill: #fff; font: 12px "Noto Sans CJK SC", sans-serif; text-anchor: middle; }
.nets { padding-top: 11px; height: 107px; border-bottom: 1px solid #800000; }
.net { height: 24px; display: flex; align-items: center; font-size: 14px; }
.net > span { font-size: 16px; width: 80px; padding-left: 1px; white-space: nowrap; }
.left { width: 89px; display: flex; justify-content: flex-end; } .left b { margin-right: 8px; } .left i { height: 12px; background: #b41e1e; }
.right { flex: 1; } .right i { display: block; height: 12px; background: #32962d; } .right b { margin-left: 6px; }
.dots { display: flex; gap: 8px; padding-left: 120px; margin-top: -1px; } .dots i { width: 6px; height: 6px; border-radius: 3px; background: #c0c0c0; } .dots .on { background: #ff3232; }
.rank-title { background: #240404; height: 18px; line-height: 19px; padding-left: 4px; }
.rank { border-bottom: 1px solid #800000; }
.rank th { background: #141414; height: 20px; font-size: 16px; line-height: 20px; border-right: 1px solid #000; box-sizing: border-box; }
.rank th:nth-child(1) { width: 102px; padding-left: 1px; } .rank th:nth-child(2) { width: 56px; text-align: right; padding-right: 12px; } .rank th:nth-child(3) { width: 77px; text-align: right; } .rank th:nth-child(4) { background: #000; }
.rank td { height: 26px; font: bold 14px/26px "Liberation Sans", sans-serif; text-align: right; }
.rank td:nth-child(1) { text-align: left; color: #ff8; font: 16px/26px "Noto Sans CJK SC", sans-serif; padding-left: 1px; }
.rank td:nth-child(2) { padding-right: 5px; } .rank th svg { vertical-align: -1px; } .rank td:nth-child(3) { padding-right: 1px; }
.wizard { display: flex; height: 19px; background: #240404; }
.wizard > span { flex: 1; padding-left: 3px; line-height: 18px; }
.wizard button { width: 26px; height: 22px; border: 1px solid #800000; border-width: 0 0 1px 1px; background: #240404; z-index: 1; }
.wizard label { width: 69px; background: #000; border: 1px solid #800000; border-width: 0 0 1px 1px; box-sizing: border-box; display: flex; align-items: center; gap: 6px; padding-left: 2px; }
.wizard select { appearance: none; border: 0; padding: 0; margin: 0; background: none; color: #c0c0c0; font: 12px/16px "Liberation Sans", "Noto Sans CJK SC", sans-serif; width: 44px; }
.feed table { height: 262px; }
.feed td { line-height: 14px; } .feed td:nth-child(1) { width: 66px; padding-left: 3px; } .feed td:nth-child(2) { width: 70px; } .feed td:nth-child(3) { width: 62px; } .feed td:nth-child(4) { text-align: right; }

.toolbar { position: absolute; left: 11px; top: 5px; height: 36px; background: #f0f0f0; border: 1px solid #909090; border-left: 0; border-radius: 0 3px 3px 0; box-sizing: border-box; display: flex; align-items: center; width: 775px; }
.close { width: 14px; height: 34px; background: #c8c8c8; align-items: flex-start; padding-top: 4px; border-right: 1px solid #aaa; }
.grip { width: 2px; height: 24px; margin: 0 4px 0 8px; border: dotted #999; border-width: 0 1px; }
.tool { width: 29px; height: 30px; flex: none; }
.sep { width: 1px; height: 34px; background: #aaa; margin: 0 2px; }
.pointer { width: 24px; height: 24px; background: #b4b4b4; border: 1px solid #999; margin: 0 2px 0 4px; }
.letter { font: bold 20px/24px "Liberation Serif", serif; color: #2b5797; text-align: center; }
.caret { width: 8px; margin-left: -3px; }
.caret.wide { margin: 0 4px 0 -1px; }
.swatch { width: 24px; height: 24px; background: #ff0; border: 1px solid #bbb; margin: 0 2px 0 7px; }
.note { position: absolute; left: 856px; top: 111px; margin: 0; color: #fff; font: 24px/36px "Noto Sans CJK SC", sans-serif; white-space: nowrap; pointer-events: none; }
.note span { font-family: "Noto Sans CJK TC", sans-serif; }
.robot { position: absolute; left: 6px; top: 713px; }
</style>
